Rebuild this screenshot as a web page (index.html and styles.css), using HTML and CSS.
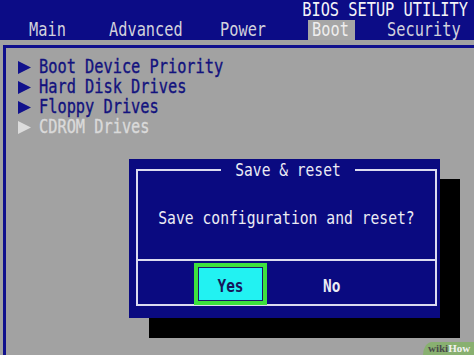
FILE: index.html
```html
<!DOCTYPE html>
<html>
<head>
<meta charset="utf-8">
<link rel="stylesheet" href="styles.css">
</head>
<body>
<div class="screen">
  <header class="bar">
    <div class="title"><span class="tall">BIOS SETUP UTILITY</span></div>
    <nav class="tabs">
      <span class="tab"><span class="tall">Main</span></span>
      <span class="tab"><span class="tall">Advanced</span></span>
      <span class="tab"><span class="tall">Power</span></span>
      <span class="tab active"><span class="tall">Boot</span></span>
      <span class="tab"><span class="tall">Security</span></span>
    </nav>
  </header>
  <section class="panel">
    <ul class="menu">
      <li class="item"><svg class="arrow" viewBox="0 0 13 13"><polygon points="0,0 13,6.5 0,13"/></svg><span class="tall">Boot Device Priority</span></li>
      <li class="item"><svg class="arrow" viewBox="0 0 13 13"><polygon points="0,0 13,6.5 0,13"/></svg><span class="tall">Hard Disk Drives</span></li>
      <li class="item"><svg class="arrow" viewBox="0 0 13 13"><polygon points="0,0 13,6.5 0,13"/></svg><span class="tall">Floppy Drives</span></li>
      <li class="item disabled"><svg class="arrow" viewBox="0 0 13 13"><polygon points="0,0 13,6.5 0,13"/></svg><span class="tall">CDROM Drives</span></li>
    </ul>
  </section>
  <div class="dialog">
    <div class="frame">
      <div class="dlg-title"><span class="tall">Save &amp; reset</span></div>
      <div class="message"><span class="tall">Save configuration and reset?</span></div>
      <div class="buttons">
        <span class="btn selected"><span class="tall">Yes</span></span>
        <span class="btn"><span class="tall">No</span></span>
      </div>
    </div>
  </div>
  <div class="watermark"><span class="wm-wiki">wiki</span><span class="wm-how">How</span></div>
</div>
</body>
</html>
```
FILE: styles.css
```css
* { box-sizing: border-box; }
html, body { margin: 0; padding: 0; }
body {
  width: 474px;
  height: 355px;
  overflow: hidden;
  background: #a2a2a2;
  font-family: "DejaVu Sans Mono", "Liberation Mono", monospace;
}
.screen {
  position: relative;
  width: 474px;
  height: 355px;
  overflow: hidden;
  background: #a2a2a2;
}
.tall {
  display: inline-block;
  transform: scaleY(1.22);
}
.bar {
  height: 40px;
  background: #0c0c86;
  display: flex;
  flex-direction: column;
}
.title {
  height: 20px;
  line-height: 20px;
  font-size: 15.3px;
  color: #f4f4f8;
  text-align: right;
  padding-right: 6px;
}
.tabs {
  height: 20px;
  display: grid;
  grid-template-columns: 80px 111px 92px 75px auto;
  padding-left: 25px;
  font-size: 15.3px;
  line-height: 20px;
  color: #d2d2dc;
}
.tab {
  padding-left: 4px;
}
.tab.active {
  justify-self: start;
  width: 47px;
  background: #a6a6a6;
  color: #eeeeee;
}
.panel {
  margin: 5px -20px 0 3px;
  height: 320px;
  border-top: 3px solid #10108c;
  border-left: 3px solid #10108c;
}
.menu {
  list-style: none;
  margin: 0;
  padding: 9px 0 0 12px;
  font-size: 15.3px;
  line-height: 20px;
  color: #12127e;
  -webkit-text-stroke: 0.3px currentColor;
}
.item {
  display: flex;
  align-items: center;
  height: 20px;
}
.arrow {
  width: 13px;
  height: 13px;
  margin-right: 8px;
  fill: #12128c;
}
.item.disabled { color: #dadada; }
.item.disabled .arrow { fill: #dcdcdc; }

.dialog {
  position: absolute;
  left: 129px;
  top: 159px;
  width: 311px;
  height: 159px;
  background: #0a0a80;
  box-shadow: 20px 20px 0 0 #000;
  padding: 10px 3px 12px 7px;
  color: #ececf4;
}
.frame {
  height: 137px;
  border: 2px solid #dcdcf0;
  display: flex;
  flex-direction: column;
}
.dlg-title {
  align-self: center;
  margin-top: -11px;
  height: 20px;
  line-height: 20px;
  padding: 0 14px;
  background: #0a0a80;
  font-size: 14.6px;
  margin-left: 3px;
}
.message {
  height: 79px;
  display: flex;
  align-items: center;
  justify-content: center;
  font-size: 14.7px;
  padding-bottom: 5px;
}
.buttons {
  flex: 1;
  border-top: 2px solid #dcdcf0;
  display: flex;
  align-items: flex-end;
  gap: 56px;
  padding-left: 56px;
  font-family: "DejaVu Sans Mono", monospace;
  font-weight: bold;
  font-size: 14.4px;
}
.btn {
  height: 42px;
  display: flex;
  align-items: center;
  justify-content: center;
  margin-bottom: -1px;
  padding-top: 3px;
}
.btn.selected {
  width: 73px;
  border: 4px solid #3ee23e;
  background: #22f2f2;
  box-shadow: inset 0 0 0 1px #1a1a66;
  color: #16165a;
}
.watermark {
  position: absolute;
  right: 0;
  bottom: 0;
  width: 51px;
  height: 13px;
  background: #88b070;
  border-top-left-radius: 9px 13px;
  font-family: "Liberation Serif", serif;
  font-weight: bold;
  font-size: 11px;
  line-height: 13px;
  padding-left: 5px;
}
.wm-wiki { color: #4a4a4a; }
.wm-how { color: #f2f2f2; }
```
